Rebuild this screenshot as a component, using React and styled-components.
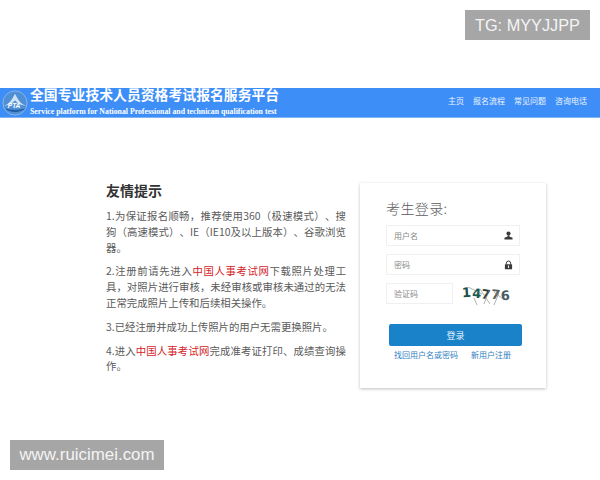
import styled, { createGlobalStyle } from "styled-components"

const GlobalStyle = createGlobalStyle`
	html, body {
		margin: 0;
		padding: 0;
		background: #fff;
		font-family: "Noto Sans CJK SC", "Liberation Sans", sans-serif;
		text-spacing-trim: space-all;
	}
`

const captcha = [
	{ ch: "1", color: "#1f4f4a", rot: -4, top: -1 },
	{ ch: "4", color: "#1b5a4f", rot: 3, top: 0 },
	{ ch: "7", color: "#2c3a36", rot: 8, top: 1 },
	{ ch: "7", color: "#55605c", rot: 6, top: 1 },
	{ ch: "6", color: "#4a5a60", rot: -3, top: 2 },
]

const tips = [
	<>1.为保证报名顺畅，推荐使用360（极速模式）、搜狗（高速模式）、IE（IE10及以上版本）、谷歌浏览器。</>,
	<>2.注册前请先进入<em>中国人事考试网</em>下载照片处理工具，对照片进行审核，未经审核或审核未通过的无法正常完成照片上传和后续相关操作。</>,
	<>3.已经注册并成功上传照片的用户无需更换照片。</>,
	<>4.进入<em>中国人事考试网</em>完成准考证打印、成绩查询操作。</>,
]

const Logo = () => (
	<svg width="26" height="26" viewBox="0 0 28 28">
		<circle cx="14" cy="14" r="13" fill="#4f8fd6" stroke="#8db8e8" strokeWidth="1" />
		<path d="M2 17 C8 15 11 10 14 4 C17 10 20 15 26 17 C20 16 17 15 14 11 C11 15 8 16 2 17 Z" fill="#cfe2f6" />
		<path d="M3 20 C10 22 18 22 25 20 C20 25 8 25 3 20 Z" fill="#1f5ca6" />
		<text x="13" y="19.5" textAnchor="middle" fontSize="7" fontWeight="700" fontStyle="italic" fontFamily="Liberation Sans" fill="#fff">PTA</text>
	</svg>
)

const UserIcon = () => (
	<svg width="9" height="9" viewBox="0 0 10 10">
		<circle cx="5" cy="2.9" r="2.3" fill="#3a3a3a" />
		<path d="M4 5 H6 V6 L9.5 7.6 V9.4 H.5 V7.6 L4 6 Z" fill="#3a3a3a" />
	</svg>
)

const LockIcon = () => (
	<svg width="9" height="10" viewBox="0 0 10 10">
		<path d="M2.6 4.4 V3 a2.4 2.4 0 0 1 4.8 0 V4.4" fill="none" stroke="#3a3a3a" strokeWidth="1.1" />
		<rect x="1" y="4.2" width="8" height="5.6" rx=".6" fill="#3a3a3a" />
		<rect x="4.4" y="5.6" width="1.2" height="2.6" fill="#fff" />
	</svg>
)

const App = () => (
	<>
		<GlobalStyle />
		<Page>
			<Mark $side="top">TG: MYYJJPP</Mark>
			<Header>
				<Brand>
					<Logo />
					<BrandText>
						<h1>全国专业技术人员资格考试报名服务平台</h1>
						<p>Service platform for National Professional and technican qualification test</p>
					</BrandText>
				</Brand>
				<Nav>
					{["主页", "报名流程", "常见问题", "咨询电话"].map(item => <a key={item}>{item}</a>)}
				</Nav>
			</Header>
			<Main>
				<Notice>
					<h2>友情提示</h2>
					{tips.map((tip, i) => <p key={i}>{tip}</p>)}
				</Notice>
				<LoginCard>
					<LoginTitle>考生登录:</LoginTitle>
					<Field>
						<span>用户名</span>
						<UserIcon />
					</Field>
					<Field>
						<span>密码</span>
						<LockIcon />
					</Field>
					<CaptchaRow>
						<Field $short>
							<span>验证码</span>
						</Field>
						<Captcha>
							{captcha.map((c, i) => <Digit key={i} $color={c.color} $rot={c.rot} $top={c.top}>{c.ch}</Digit>)}
							<svg width="50" height="24" viewBox="0 0 50 24">
								<path d="M6 3 L20 10 M18 5 L28 20 M27 6 L22 20 M32 8 L42 16 M37 9 L32 21 M12 14 L15 21" stroke="#77807c" strokeWidth=".6" fill="none" />
							</svg>
						</Captcha>
					</CaptchaRow>
					<LoginButton>登录</LoginButton>
					<Links>
						<a>找回用户名或密码</a>
						<a>新用户注册</a>
					</Links>
				</LoginCard>
			</Main>
			<Mark $side="bottom">www.ruicimei.com</Mark>
		</Page>
	</>
)

const Page = styled.div`
	position: relative;
	width: 600px;
	height: 480px;
	overflow: hidden;
	padding-top: 88px;
	box-sizing: border-box;
`

const Mark = styled.div`
	position: absolute;
	height: 30px;
	line-height: 30px;
	background: #a6a6a6;
	color: #f4f4f4;
	font-family: "Liberation Sans", sans-serif;
	text-align: center;
	${p => p.$side === "top"
		? "top: 10px; left: 465px; width: 125px; font-size: 16.3px;"
		: "top: 440px; left: 10px; width: 154px; font-size: 16.9px;"}
`

const Header = styled.header`
	height: 30px;
	background: #3e8ef7;
	border-bottom: 1px solid #7fb4f5;
	box-sizing: border-box;
	display: flex;
	align-items: center;
	justify-content: space-between;
	padding: 0 13px 0 2px;
	overflow: hidden;
`

const Brand = styled.div`
	display: flex;
	align-items: center;
	gap: 2px;
	color: #fff;

	svg {
		flex: none;
		margin-top: 1px;
	}
`

const BrandText = styled.div`
	margin-top: -3px;

	h1 {
		margin: 0;
		font-size: 13.85px;
		line-height: 16px;
		font-weight: 700;
		white-space: nowrap;
	}

	p {
		margin: 5px 0 0;
		font-family: "Liberation Serif", serif;
		font-size: 7.8px;
		line-height: 9px;
		font-weight: 700;
		white-space: nowrap;
	}
`

const Nav = styled.nav`
	display: flex;
	gap: 9px;
	margin-top: -3px;

	a {
		color: #eaf3ff;
		font-size: 8px;
		line-height: 12px;
	}
`

const Main = styled.main`
	display: flex;
	align-items: flex-start;
	padding: 63px 0 0 106px;
`

const Notice = styled.section`
	width: 240px;
	color: #5a5a5a;

	h2 {
		margin: 0 0 9px;
		font-size: 14px;
		line-height: 18px;
		font-weight: 700;
		color: #333;
	}

	p {
		margin: 0 0 8px;
		font-size: 10.4px;
		line-height: 15.8px;
		text-align: justify;
		word-break: break-all;
	}

	em {
		font-style: normal;
		color: #d3232a;
	}
`

const LoginCard = styled.section`
	width: 186px;
	height: 205px;
	margin: 2px 0 0 14px;
	padding: 16px 26px 0;
	box-sizing: border-box;
	background: #fff;
	box-shadow: 0 1px 3px rgba(0, 0, 0, .25);
`

const LoginTitle = styled.div`
	font-size: 14px;
	line-height: 18px;
	letter-spacing: .4px;
	font-weight: 300;
	color: #5c5c5c;
	margin: 0 0 8px;
`

const Field = styled.div`
	width: ${p => p.$short ? "67px" : "134px"};
	height: 21px;
	box-sizing: border-box;
	border: 1px solid #f0f0f0;
	display: flex;
	align-items: center;
	justify-content: space-between;
	padding: 0 3px 0 7px;
	margin-bottom: 8px;

	span {
		font-size: 8px;
		color: #888;
	}

	svg {
		margin-right: 3px;
	}
`

const CaptchaRow = styled.div`
	display: flex;
	align-items: flex-start;
`

const Captcha = styled.div`
	position: relative;
	display: flex;
	margin: 1px 0 0 9px;
	height: 24px;
	font-family: "DejaVu Sans", sans-serif;
	font-weight: 700;
	font-size: 13px;
	line-height: 20px;

	svg {
		position: absolute;
		top: 0;
		left: 0;
	}
`

const Digit = styled.span`
	display: block;
	width: 9.7px;
	color: ${p => p.$color};
	transform: translateY(${p => p.$top}px) rotate(${p => p.$rot}deg);
`

const LoginButton = styled.button`
	display: block;
	width: 133px;
	height: 22px;
	margin: 12px 0 0 3px;
	padding: 0;
	border: 0;
	border-radius: 2px;
	background: #1a82c8;
	color: #e8f3fb;
	font-family: inherit;
	font-size: 9px;
`

const Links = styled.div`
	display: flex;
	gap: 13px;
	margin: 4px 0 0 8px;

	a {
		font-size: 8px;
		line-height: 10px;
		color: #2f80c4;
	}
`

export default App
